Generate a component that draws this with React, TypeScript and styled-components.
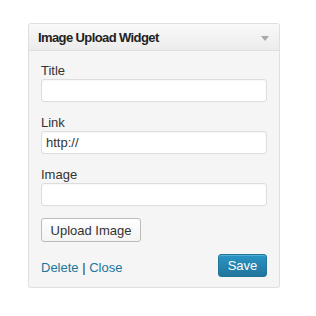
import React from "react";
import styled, { createGlobalStyle } from "styled-components";

const GlobalStyle = createGlobalStyle`
    body {
        margin: 0;
        background: #ffffff;
        font-family: "Liberation Sans", Arial, sans-serif;
        font-size: 13px;
        color: #333333;
    }
`;

const Page = styled.div`
    padding: 23px 0 0 28px;
`;

const Widget = styled.div`
    width: 250px;
    border: 1px solid #dfdfdf;
    border-radius: 3px;
    background: #f5f5f5;
    box-shadow: 0 1px 1px rgba(0, 0, 0, 0.04);
`;

const Header = styled.div`
    height: 26px;
    display: flex;
    align-items: center;
    justify-content: space-between;
    padding: 0 10px 0 9px;
    background: linear-gradient(to bottom, #f9f9f9, #ececec);
    border-bottom: 1px solid #dfdfdf;
    border-radius: 3px 3px 0 0;
`;

const HeaderTitle = styled.h3`
    margin: 0;
    font-size: 13px;
    font-weight: bold;
    letter-spacing: -0.6px;
    color: #222222;
`;

const Arrow = styled.span`
    width: 0;
    height: 0;
    border-left: 4px solid transparent;
    border-right: 4px solid transparent;
    border-top: 5px solid #aaaaaa;
    margin-top: 2px;
`;

const Body = styled.div`
    padding: 12px 12px 10px 12px;
`;

const Label = styled.label`
    display: block;
    line-height: 16px;
`;

const Input = styled.input`
    display: block;
    box-sizing: border-box;
    width: 100%;
    height: 23px;
    margin: 0 0 13px 0;
    padding: 0 4px;
    border: 1px solid #dddddd;
    border-radius: 3px;
    background: #ffffff;
    font-family: "Liberation Sans", Arial, sans-serif;
    font-size: 13px;
    color: #333333;
    box-shadow: inset 0 1px 2px rgba(0, 0, 0, 0.04);
    outline: none;
`;

const UploadButton = styled.button`
    display: block;
    box-sizing: border-box;
    height: 24px;
    width: 100px;
    margin: -1px 0 12px 0;
    padding: 0;
    white-space: nowrap;
    border: 1px solid #bbbbbb;
    border-radius: 3px;
    background: linear-gradient(to bottom, #fefefe, #f4f4f4);
    font-family: "Liberation Sans", Arial, sans-serif;
    font-size: 13px;
    color: #333333;
`;

const Footer = styled.div`
    display: flex;
    align-items: center;
    justify-content: space-between;
`;

const Links = styled.div`
    margin-top: 3px;
`;

const Link = styled.a`
    color: #21759b;
    text-decoration: none;
`;

const SaveButton = styled.button`
    box-sizing: border-box;
    height: 23px;
    width: 49px;
    padding: 0;
    border: 1px solid #21759b;
    border-radius: 3px;
    background: linear-gradient(to bottom, #2a95c5, #21759b);
    color: #ffffff;
    font-family: "Liberation Sans", Arial, sans-serif;
    font-size: 13px;
    box-shadow: inset 0 1px 0 rgba(120, 200, 230, 0.5);
`;

export default function App() {
    return (
        <Page>
            <GlobalStyle />
            <Widget>
                <Header>
                    <HeaderTitle>Image Upload Widget</HeaderTitle>
                    <Arrow />
                </Header>
                <Body>
                    <Label>Title</Label>
                    <Input type="text" defaultValue="" />
                    <Label>Link</Label>
                    <Input type="text" defaultValue="http://" />
                    <Label>Image</Label>
                    <Input type="text" defaultValue="" />
                    <UploadButton>Upload Image</UploadButton>
                    <Footer>
                        <Links>
                            <Link href="#">Delete</Link> | <Link href="#">Close</Link>
                        </Links>
                        <SaveButton>Save</SaveButton>
                    </Footer>
                </Body>
            </Widget>
        </Page>
    );
}
